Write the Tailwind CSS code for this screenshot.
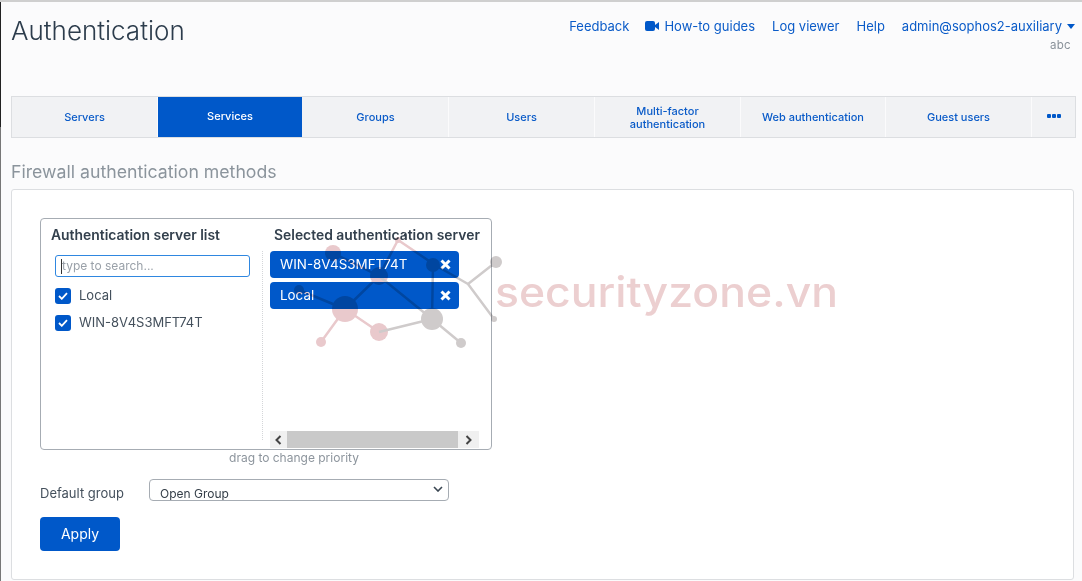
<!DOCTYPE html>
<html lang="en">
<head>
    <meta charset="UTF-8">
    <title>Authentication</title>
    <script src="https://cdn.jsdelivr.net/npm/@tailwindcss/browser@4"></script>
</head>
<body class="bg-[#fbfbfc] font-['Inter',sans-serif] overflow-hidden">
<div class="relative w-[1082px] h-[581px] overflow-hidden border-t-2 border-[#cfcfcf] pl-[11px] pr-[6px]">
    <div class="absolute left-0 top-0 w-px h-[125px] bg-[#222]"></div>
    <div class="absolute left-0 top-[125px] w-px h-[456px] bg-[#777]"></div>

    <!-- header -->
    <header class="flex justify-between h-[94px]">
        <h1 class="text-[26px] leading-[32px] mt-[13px] font-light text-[#2c3c4c]">Authentication</h1>
        <div class="flex flex-col items-end pt-[15px] pr-px">
            <nav class="flex items-center gap-[17px] text-[13px] leading-[18px] text-[#0a5bc8]">
                <a href="#" class="mr-[-1px]">Feedback</a>
                <a href="#" class="flex items-center gap-[5px]">
                    <svg width="14" height="10" viewBox="0 0 14 10"><rect x="0" y="0" width="10" height="10" rx="2" fill="#0058c9"/><path d="M10 4 L14 1 V9 L10 6 Z" fill="#0058c9"/></svg>
                    How-to guides
                </a>
                <a href="#">Log viewer</a>
                <a href="#">Help</a>
                <a href="#" class="flex items-center gap-[5px]">admin@sophos2-auxiliary
                    <svg width="8" height="5" viewBox="0 0 8 5"><path d="M0 0 H8 L4 5 Z" fill="#0058c9"/></svg>
                </a>
            </nav>
            <span class="text-[11.5px] leading-[14px] mt-[3px] mr-[4px] text-[#8a929a] tracking-[0.3px]">abc</span>
        </div>
    </header>

    <!-- tabs -->
    <div class="flex h-[42px] w-[1065px] border border-[#dcdee1] bg-[#f1f2f4] text-[11px] font-medium leading-[13px] text-[#0a5bc8] text-center">
        <a href="#" class="w-[146px] flex items-center justify-center border-r border-[#fbfbfc]">Servers</a>
        <a href="#" class="w-[144px] flex items-center justify-center bg-[#0058c9] text-white pb-[2px]">Services</a>
        <a href="#" class="w-[146px] ml-px flex items-center justify-center border-r border-[#fbfbfc]">Groups</a>
        <a href="#" class="w-[146px] flex items-center justify-center border-r border-[#fbfbfc]">Users</a>
        <a href="#" class="w-[146px] pt-[2px] flex items-center justify-center border-r border-[#fbfbfc]">Multi-factor<br>authentication</a>
        <a href="#" class="w-[145px] flex items-center justify-center border-r border-[#fbfbfc]">Web authentication</a>
        <a href="#" class="w-[146px] flex items-center justify-center border-r border-[#fbfbfc]">Guest users</a>
        <a href="#" class="flex-1 flex items-center justify-center pb-[3px]">
            <svg width="14" height="4" viewBox="0 0 14 4" fill="#0058c9"><rect width="4" height="4" rx="1"/><rect x="5" width="4" height="4" rx="1"/><rect x="10" width="4" height="4" rx="1"/></svg>
        </a>
    </div>

    <h2 class="text-[17.7px] leading-[24px] mt-[22px] text-[#8b949c]">Firewall authentication methods</h2>

    <!-- main card -->
    <section class="mt-[5px] w-[1063px] h-[391px] bg-white border border-[#dcdee1] rounded-[3px] pt-[28px] pl-[28px]">
        <div class="flex w-[452px] h-[232px] border border-[#a6acb3] rounded-[4px] pl-[10px]">
            <div class="w-[212px] flex flex-col">
                <h3 class="text-[13.9px] leading-[16px] font-semibold text-[#33404d] mt-[8px] whitespace-nowrap">Authentication server list</h3>
                <div class="h-[189px] mt-[8px] border-r border-dotted border-[#d4d6d9]">
                    <div class="flex items-center w-[195px] h-[22px] ml-[4px] mt-[4px] border border-[#2f87e0] rounded-[3px] bg-white pl-[5px]">
                        <span class="w-px h-[15px] bg-[#333]"></span>
                        <input type="text" placeholder="type to search..." class="flex-1 min-w-0 text-[12px] outline-none placeholder:text-[#9aa1a9]">
                    </div>
                    <div class="flex items-center gap-[8px] ml-[4px] mt-[11px] h-[16px] text-[13px] text-[#44505c]">
                        <span class="flex items-center justify-center w-[16px] h-[16px] rounded-[3px] bg-[#0058c9]">
                            <svg width="10" height="8" viewBox="0 0 10 8"><path d="M1 4 L3.8 6.8 L9 1.2" fill="none" stroke="#fff" stroke-width="1.8"/></svg>
                        </span>
                        Local
                    </div>
                    <div class="flex items-center gap-[8px] ml-[4px] mt-[11px] h-[16px] text-[13px] text-[#44505c]">
                        <span class="flex items-center justify-center w-[16px] h-[16px] rounded-[3px] bg-[#0058c9]">
                            <svg width="10" height="8" viewBox="0 0 10 8"><path d="M1 4 L3.8 6.8 L9 1.2" fill="none" stroke="#fff" stroke-width="1.8"/></svg>
                        </span>
                        WIN-8V4S3MFT74T
                    </div>
                </div>
            </div>
            <div class="flex-1 flex flex-col pl-[7px]">
                <h3 class="text-[13.9px] leading-[16px] font-semibold text-[#33404d] mt-[8px] ml-[4px] whitespace-nowrap">Selected authentication server</h3>
                <div class="flex items-center justify-between w-[189px] h-[27px] mt-[8px] pl-[10px] pr-[8px] rounded-[4px] bg-[#0058c9] text-[13.4px] text-white">
                    WIN-8V4S3MFT74T
                    <svg width="11" height="11" viewBox="0 0 11 11"><path d="M1.5 1.5 L9.5 9.5 M9.5 1.5 L1.5 9.5" stroke="#fff" stroke-width="3"/></svg>
                </div>
                <div class="flex items-center justify-between w-[189px] h-[27px] mt-[4px] pl-[10px] pr-[8px] rounded-[4px] bg-[#0058c9] text-[13.4px] text-white">
                    Local
                    <svg width="11" height="11" viewBox="0 0 11 11"><path d="M1.5 1.5 L9.5 9.5 M9.5 1.5 L1.5 9.5" stroke="#fff" stroke-width="3"/></svg>
                </div>
                <div class="flex items-center w-[209px] h-[17px] mt-auto mb-px bg-[#f0f0f0]">
                    <span class="flex items-center justify-center w-[17px]">
                        <svg width="7" height="10" viewBox="0 0 7 10"><path d="M5.5 1 L1.5 5 L5.5 9" fill="none" stroke="#444" stroke-width="2"/></svg>
                    </span>
                    <span class="w-[171px] h-[17px] bg-[#c9c9c9]"></span>
                    <span class="flex items-center justify-center w-[21px]">
                        <svg width="7" height="10" viewBox="0 0 7 10"><path d="M1.5 1 L5.5 5 L1.5 9" fill="none" stroke="#444" stroke-width="2"/></svg>
                    </span>
                </div>
            </div>
        </div>
        <p class="w-[452px] pl-[56px] text-center text-[12px] leading-[14px] mt-px text-[#8d959d]">drag to change priority</p>

        <div class="flex items-start mt-[14px] h-[22px]">
            <label class="w-[109px] mt-[4px] text-[13px] leading-[20px] text-[#44505c]">Default group</label>
            <div class="flex justify-between w-[300px] h-[22px] border border-[#a6acb3] rounded-[4px] pl-[10px] pr-[5px] overflow-hidden">
                <span class="text-[12px] leading-[14px] mt-[7px] text-[#333d47]">Open Group</span>
                <svg class="mt-[6px]" width="10" height="6" viewBox="0 0 10 6"><path d="M1 1 L5 5 L9 1" fill="none" stroke="#3a4652" stroke-width="1.6"/></svg>
            </div>
        </div>
        <button class="block w-[80px] h-[34px] mt-[16px] pb-px rounded-[4px] bg-[#0058c9] text-[14px] text-white">Apply</button>
    </section>

    <!-- watermark, lies over the content -->
    <svg class="absolute left-0 top-[-2px] pointer-events-none mix-blend-multiply" width="1082" height="581" viewBox="0 0 1082 581">
        <g stroke="#e9c9cc" stroke-width="2.5" fill="#e9c9cc">
            <path d="M345 309 L379 276 M379 276 L398 240 M345 309 L299 290 M345 309 L379 332 M345 309 L321 342 M333 253 L379 276 M398 240 L435 265"/>
            <circle cx="333" cy="253" r="8" stroke="none"/>
            <circle cx="379" cy="276" r="9" stroke="none"/>
            <circle cx="345" cy="309" r="13" stroke="none"/>
            <circle cx="299" cy="290" r="5" stroke="none"/>
            <circle cx="321" cy="342" r="5" stroke="none"/>
            <circle cx="379" cy="332" r="9" stroke="none"/>
            <circle cx="398" cy="240" r="3" stroke="none"/>
        </g>
        <g stroke="#cfcbcb" stroke-width="2.5" fill="#cfcbcb">
            <path d="M379 276 L432 319 M433 265 L432 319 M379 332 L432 319 M432 319 L461 343 M435 265 L468 284 M468 284 L496 262 M468 284 L494 319"/>
            <circle cx="433" cy="265" r="7" stroke="none"/>
            <circle cx="496" cy="262" r="6" stroke="none"/>
            <circle cx="494" cy="319" r="3" stroke="none"/>
            <circle cx="432" cy="319" r="11" stroke="none"/>
            <circle cx="461" cy="343" r="5" stroke="none"/>
        </g>
        <text x="495" y="307" font-family="Inter, sans-serif" font-size="41" font-weight="500" textLength="343" lengthAdjust="spacingAndGlyphs" fill="#eccfd0">securityzone.vn</text>
    </svg>
</div>
</body>
</html>
